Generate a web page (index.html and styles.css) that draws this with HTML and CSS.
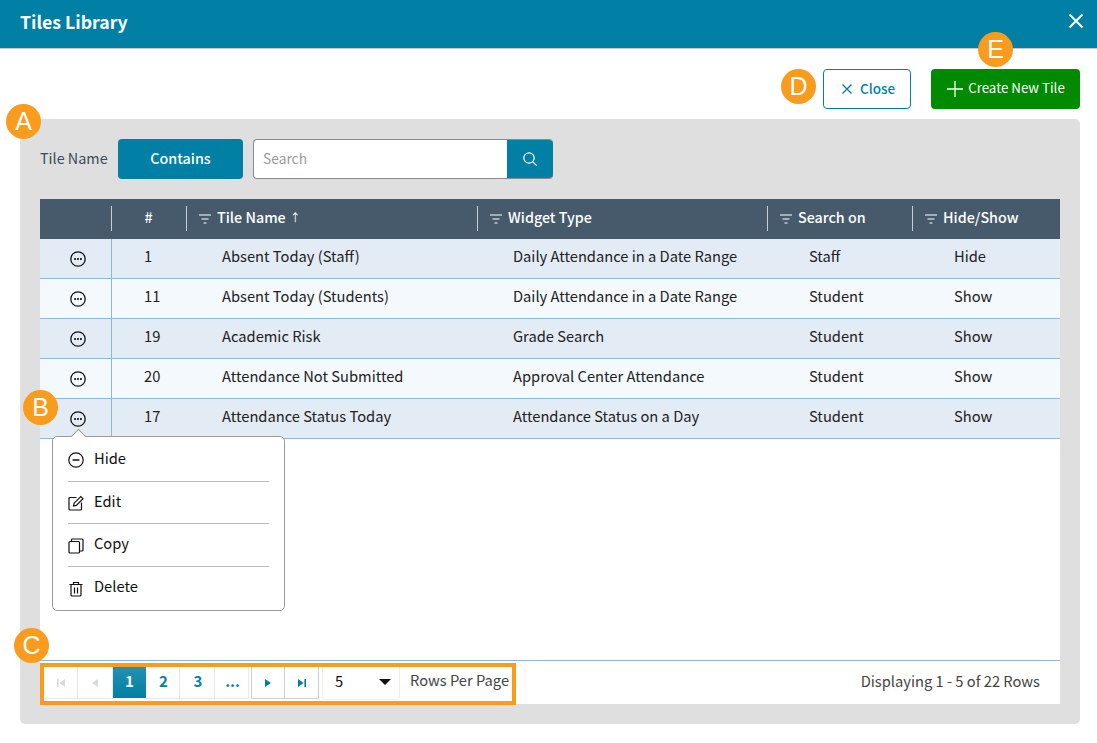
FILE: index.html
```html
<!DOCTYPE html>
<html lang="en">
<head>
<meta charset="utf-8">
<title>Tiles Library</title>
<link rel="stylesheet" href="styles.css">
</head>
<body>
<div class="page">
  <header class="topbar">
    <h1 class="title">Tiles Library</h1>
    <svg class="x-icon" width="16" height="16" viewBox="0 0 16 16"><path d="M1.500 1.500l13 13M14.500 1.500l-13 13" stroke="#fff" stroke-width="2" fill="none"/></svg>
  </header>
  <div class="actions">
    <button class="btn btn-close"><svg width="12" height="12" viewBox="0 0 12 12"><path d="M1.500 1.500l9 9M10.500 1.500l-9 9" stroke="#017fa5" stroke-width="1.400" fill="none"/></svg>Close</button>
    <button class="btn btn-create"><svg width="18" height="18" viewBox="0 0 18 18"><path d="M9 1v16M1 9h16" stroke="#fff" stroke-width="1.300" fill="none"/></svg>Create New Tile</button>
  </div>
  <main class="panel">
    <div class="filter">
      <span class="filter-label">Tile Name</span>
      <button class="contains">Contains</button>
      <div class="search">
        <span class="search-text">Search</span>
        <span class="search-btn"><svg width="16" height="16" viewBox="0 0 16 16"><circle cx="7" cy="7" r="5.200" stroke="#fff" stroke-width="1.200" fill="none"/><path d="M10.800 10.800l3.800 3.800" stroke="#fff" stroke-width="1.200"/></svg></span>
      </div>
    </div>
    <section class="grid">
      <div class="row head">
        <div class="hc hc-blank"></div>
        <div class="hc hc-num">#</div>
        <div class="hc"><svg class="funnel" width="12" height="10" viewBox="0 0 12 10"><path d="M0 1h12M2.500 5h7M4.500 9h3" stroke="#fff" stroke-width="1.100"/></svg>Tile Name <span class="arrow">↑</span></div>
        <div class="hc"><svg class="funnel" width="12" height="10" viewBox="0 0 12 10"><path d="M0 1h12M2.500 5h7M4.500 9h3" stroke="#fff" stroke-width="1.100"/></svg>Widget Type</div>
        <div class="hc"><svg class="funnel" width="12" height="10" viewBox="0 0 12 10"><path d="M0 1h12M2.500 5h7M4.500 9h3" stroke="#fff" stroke-width="1.100"/></svg>Search on</div>
        <div class="hc"><svg class="funnel" width="12" height="10" viewBox="0 0 12 10"><path d="M0 1h12M2.500 5h7M4.500 9h3" stroke="#fff" stroke-width="1.100"/></svg>Hide/Show</div>
      </div>
      <div class="row body odd">
        <div class="c c-act"><svg width="16" height="16" viewBox="0 0 16 16"><circle cx="8" cy="8" r="7.200" stroke="#111" stroke-width="1.300" fill="none"/><path d="M4.300 8h1.600M7.200 8h1.600M10.100 8h1.600" stroke="#111" stroke-width="1.800"/></svg></div>
        <div class="c c-num">1</div><div class="c c-w">Absent Today (Staff)</div><div class="c c-w">Daily Attendance in a Date Range</div><div class="c c-n">Staff</div><div class="c c-n">Hide</div>
      </div>
      <div class="row body even">
        <div class="c c-act"><svg width="16" height="16" viewBox="0 0 16 16"><circle cx="8" cy="8" r="7.200" stroke="#111" stroke-width="1.300" fill="none"/><path d="M4.300 8h1.600M7.200 8h1.600M10.100 8h1.600" stroke="#111" stroke-width="1.800"/></svg></div>
        <div class="c c-num">11</div><div class="c c-w">Absent Today (Students)</div><div class="c c-w">Daily Attendance in a Date Range</div><div class="c c-n">Student</div><div class="c c-n">Show</div>
      </div>
      <div class="row body odd">
        <div class="c c-act"><svg width="16" height="16" viewBox="0 0 16 16"><circle cx="8" cy="8" r="7.200" stroke="#111" stroke-width="1.300" fill="none"/><path d="M4.300 8h1.600M7.200 8h1.600M10.100 8h1.600" stroke="#111" stroke-width="1.800"/></svg></div>
        <div class="c c-num">19</div><div class="c c-w">Academic Risk</div><div class="c c-w">Grade Search</div><div class="c c-n">Student</div><div class="c c-n">Show</div>
      </div>
      <div class="row body even">
        <div class="c c-act"><svg width="16" height="16" viewBox="0 0 16 16"><circle cx="8" cy="8" r="7.200" stroke="#111" stroke-width="1.300" fill="none"/><path d="M4.300 8h1.600M7.200 8h1.600M10.100 8h1.600" stroke="#111" stroke-width="1.800"/></svg></div>
        <div class="c c-num">20</div><div class="c c-w">Attendance Not Submitted</div><div class="c c-w">Approval Center Attendance</div><div class="c c-n">Student</div><div class="c c-n">Show</div>
      </div>
      <div class="row body odd">
        <div class="c c-act"><svg width="16" height="16" viewBox="0 0 16 16"><circle cx="8" cy="8" r="7.200" stroke="#111" stroke-width="1.300" fill="none"/><path d="M4.300 8h1.600M7.200 8h1.600M10.100 8h1.600" stroke="#111" stroke-width="1.800"/></svg></div>
        <div class="c c-num">17</div><div class="c c-w">Attendance Status Today</div><div class="c c-w">Attendance Status on a Day</div><div class="c c-n">Student</div><div class="c c-n">Show</div>
      </div>
      <div class="spacer"></div>
      <footer class="foot">
        <div class="pager">
          <span class="pg dis"><svg width="10" height="10" viewBox="0 0 10 10"><path d="M1 1h1.600v8H1zM9 1v8L3.400 5z" fill="#d9d9d9"/></svg></span>
          <span class="pg dis"><svg width="8" height="10" viewBox="0 0 8 10"><path d="M7 1v8L1 5z" fill="#d9d9d9"/></svg></span>
          <span class="pg on">1</span>
          <span class="pg num">2</span>
          <span class="pg num wide">3</span>
          <span class="pg num">...</span>
          <span class="pg nav first-nav"><svg width="8" height="10" viewBox="0 0 8 10"><path d="M1 1v8l6-4z" fill="#017fa5"/></svg></span>
          <span class="pg nav"><svg width="10" height="10" viewBox="0 0 10 10"><path d="M1 1v8l5.600-4zM7.400 1H9v8H7.400z" fill="#017fa5"/></svg></span>
          <span class="select">5<svg width="12" height="6" viewBox="0 0 12 6"><path d="M0 0h12L6 6z" fill="#111"/></svg></span>
          <span class="rpp">Rows Per Page</span>
        </div>
        <span class="count">Displaying 1 - 5 of 22 Rows</span>
      </footer>
    </section>
  </main>

  <div class="menu">
    <span class="menu-tip"></span>
    <div class="mi mi-1"><svg width="16" height="16" viewBox="0 0 16 16"><circle cx="8" cy="8" r="7.200" stroke="#111" stroke-width="1.200" fill="none"/><path d="M4.600 8h6.800" stroke="#111" stroke-width="1.500"/></svg>Hide</div>
    <div class="mi mi-2"><svg width="16" height="16" viewBox="0 0 16 16"><path d="M8.500 2.500H2a1 1 0 0 0-1 1V14a1 1 0 0 0 1 1h10.500a1 1 0 0 0 1-1V7.500" stroke="#111" stroke-width="1.200" fill="none"/><path d="M5.500 11l.6-2.800L12.800 1.500l2.200 2.200-6.700 6.700z" stroke="#111" stroke-width="1.200" fill="none"/></svg>Edit</div>
    <div class="mi mi-3"><svg width="16" height="16" viewBox="0 0 16 16"><rect x="1" y="3.500" width="10.500" height="11.500" rx="1" stroke="#111" stroke-width="1.200" fill="none"/><path d="M3.500 3.500V2a1 1 0 0 1 1-1H14a1 1 0 0 1 1 1v10a1 1 0 0 1-1 1h-2.500" stroke="#111" stroke-width="1.200" fill="none"/></svg>Copy</div>
    <div class="mi mi-4"><svg width="16" height="16" viewBox="0 0 16 16"><path d="M1.500 3.500h13M5.500 3.500V1.500h5v2M3 3.500V14a1 1 0 0 0 1 1h8a1 1 0 0 0 1-1V3.500M6.500 6.500v6M9.500 6.500v6" stroke="#111" stroke-width="1.200" fill="none"/></svg>Delete</div>
  </div>

  <span class="mark mark-a">A</span>
  <span class="mark mark-b">B</span>
  <span class="mark mark-c">C</span>
  <span class="mark mark-d">D</span>
  <span class="mark mark-e">E</span>
</div>
</body>
</html>
```
FILE: styles.css
```css
* { box-sizing: border-box; }
html, body { margin: 0; padding: 0; }
body {
  font-family: "Noto Sans CJK SC", "Noto Sans", sans-serif;
  font-size: 14.7px;
  line-height: 20px;
  color: #222;
  background: #fff;
}
.page {
  position: relative;
  width: 1097px;
  height: 743px;
  overflow: hidden;
  display: flex;
  flex-direction: column;
}
.topbar {
  height: 49px;
  flex: none;
  background: #017fa5;
  border-bottom: 1px solid #c4c9cc;
  display: flex;
  align-items: center;
  justify-content: space-between;
  padding: 0 13px 6px 20px;
}
.title { margin: 0; font-size: 17.700px; font-weight: 700; color: #fff; line-height: 24px; }
.x-icon { margin-top: -1px; }
.actions {
  display: flex;
  justify-content: flex-end;
  gap: 20px;
  padding: 20px 17px 10px 0;
}
.btn {
  font: inherit;
  font-size: 13.800px;
  height: 40px;
  border-radius: 4px;
  display: flex;
  align-items: center;
  justify-content: center;
  padding: 0 0 3px;
}
.btn-close { width: 88px; gap: 7px; background: #fff; color: #017fa5; border: 1px solid #017fa5; font-weight: 500; font-size: 13.500px; padding-left: 2px; }
.btn-close svg { margin-top: 3px; }
.btn-create { width: 149px; gap: 4px; background: #008a00; color: #fff; border: 0; font-size: 13.300px; font-weight: 400; }
.btn-create svg { margin-top: 3px; }
.panel {
  margin: 0 17px 0 20px;
  height: 605px;
  background: #dfdfdf;
  border-radius: 5px;
  padding: 20px;
  display: flex;
  flex-direction: column;
}
.filter { display: flex; align-items: center; height: 40px; margin-bottom: 20px; }
.filter-label { width: 78px; flex: none; color: #3d4a57; margin-top: -2px; font-size: 14.400px; }
.contains {
  font: inherit;
  font-size: 14.300px;
  font-weight: 500;
  width: 125px;
  height: 40px;
  background: #017fa5;
  color: #fff;
  border: 0;
  border-radius: 4px;
  margin-right: 10px;
  padding: 0 0 2px;
}
.search {
  width: 300px;
  height: 40px;
  background: #fff;
  border: 1px solid #8a8a8a;
  border-right: 0;
  border-radius: 4px;
  display: flex;
  align-items: center;
  justify-content: space-between;
  overflow: hidden;
}
.search-text { padding: 0 0 2px 9px; color: #9a9a9a; font-size: 13.800px; }
.search-btn {
  width: 46px;
  height: 40px;
  background: #017fa5;
  display: flex;
  align-items: center;
  justify-content: center;
}
.grid {
  flex: 1;
  background: #fff;
  display: flex;
  flex-direction: column;
}
.row {
  display: grid;
  grid-template-columns: 72px 75px 291px 290px 145px 147px;
  height: 40px;
  flex: none;
}
.head { background: #475a6c; color: #fff; font-weight: 500; align-items: center; font-size: 14.300px; }
.hc {
  height: 25px;
  border-left: 1px solid #c7ced5;
  padding: 0 0 2px 12px;
  margin-left: -1px;
  display: flex;
  align-items: center;
  margin-top: -2px;
}
.hc-blank { border-left: 0; margin-left: 0; }
.hc-num { justify-content: center; padding: 0 2px 2px 0; }
.funnel { margin-right: 6px; flex: none; margin-top: 4px; }
.arrow { font-size: 11px; margin-left: 4px; font-weight: 400; }
.body { border-bottom: 1px solid #8fb6dc; align-items: center; }
.odd { background: #e3ebf5; }
.even { background: #f4f9fd; }
.c { white-space: nowrap; margin-top: -5px; }
.c-act {
  align-self: stretch;
  margin-top: 0;
  border-right: 1px solid #8fb6dc;
  display: flex;
  align-items: center;
  justify-content: center;
  padding: 1px 0 0 5px;
}
.c-num { padding-left: 32px; }
.c-w { padding-left: 35px; }
.c-n { padding-left: 41px; }
.spacer { flex: 1; }
.foot {
  height: 44px;
  flex: none;
  border-top: 1px solid #8fb6dc;
  padding: 2px 20px 0 0;
  display: flex;
  align-items: flex-start;
  justify-content: space-between;
}
.pager {
  width: 476px;
  height: 42px;
  border: 4px solid #f99b1d;
  display: flex;
  align-items: flex-start;
  background: #fff;
  position: relative;
}
.pg {
  width: 34px;
  height: 32px;
  display: flex;
  align-items: center;
  justify-content: center;
  font-weight: 700;
  font-size: 15px;
  padding: 0 0 3px 2px;
  color: #017fa5;
  border-right: 1px solid #e8e8e8;
  border-bottom: 1px solid #e8e8e8;
}
.pg.dis, .pg.nav { padding-left: 0; }
.pg svg { margin-top: 3px; }
.pg.wide { width: 35px; }
.pg.dis:nth-child(2) { width: 35px; }
.pg.on { width: 33px; height: 31px; border: 0; padding-left: 0; color: #fff; background: linear-gradient(#2291b2, #017fa5); }
.pg.nav { border-color: #cfcfcf; }
.first-nav { margin-left: 2px; border-left: 1px solid #cfcfcf; }
.select {
  width: 78px;
  height: 33px;
  margin-left: 3px;
  border: 1px solid #eee;
  border-width: 0 1px 1px;
  border-radius: 0 0 4px 4px;
  padding: 0 8px 5px 12px;
  display: flex;
  align-items: center;
  justify-content: space-between;
  color: #111;
}
.select svg { margin-top: 3px; }
.rpp { margin-left: 10px; line-height: 26px; color: #444; white-space: nowrap; }
.count { line-height: 36px; color: #444; }
.menu {
  position: absolute;
  left: 52px;
  top: 436px;
  width: 233px;
  height: 175px;
  background: #fff;
  border: 1px solid #999;
  border-radius: 5px;
  padding: 0 15px;
  display: flex;
  flex-direction: column;
}
.menu-tip {
  position: absolute;
  left: 20px;
  top: -6px;
  width: 11px;
  height: 11px;
  background: #fff;
  border: 1px solid #999;
  border-width: 1px 0 0 1px;
  transform: rotate(45deg);
}
.mi {
  display: flex;
  align-items: center;
  gap: 10px;
  height: 43px;
  padding-bottom: 4px;
  color: #111;
  border-bottom: 1px solid #bbb;
}
.mi svg { margin-top: 5px; }
.mi-1 { height: 45px; padding-bottom: 2px; }
.mi-1 svg { margin-top: 4px; }
.mi-2 { height: 42px; }
.mi-4 { padding-bottom: 6px; border-bottom: 0; }
.mi-4 svg { margin-top: 6px; }
.mark {
  position: absolute;
  width: 35px;
  height: 35px;
  border-radius: 50%;
  background: #f99b1d;
  color: #fff;
  font-family: "Liberation Sans", Arial, sans-serif;
  font-size: 25px;
  line-height: 35px;
  text-align: center;
}
.mark-a { left: 6px; top: 104px; }
.mark-b { left: 23px; top: 390px; }
.mark-c { left: 14px; top: 628px; }
.mark-d { left: 781px; top: 69px; }
.mark-e { left: 978px; top: 32px; }
```
